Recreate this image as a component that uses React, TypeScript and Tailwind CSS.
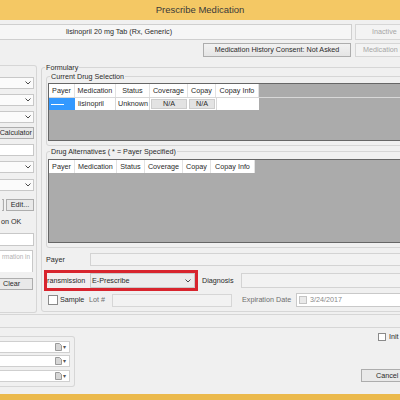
import React from "react";

type Col = { label: string; w: string };

const currentCols: Col[] = [
  { label: "Payer", w: "w-[26px]" },
  { label: "Medication", w: "w-[41px]" },
  { label: "Status", w: "w-[34px]" },
  { label: "Coverage", w: "w-[38px]" },
  { label: "Copay", w: "w-[28px]" },
  { label: "Copay Info", w: "w-[43px]" },
];

const altCols: Col[] = [
  { label: "Payer", w: "w-[26px]" },
  { label: "Medication", w: "w-[42px]" },
  { label: "Status", w: "w-[28px]" },
  { label: "Coverage", w: "w-[38px]" },
  { label: "Copay", w: "w-[28px]" },
  { label: "Copay Info", w: "w-[44px]" },
];

const Chevron = () => (
  <svg width="6" height="4" viewBox="0 0 6 4" className="shrink-0">
    <path d="M0.5 0.5 L3 3 L5.5 0.5" fill="none" stroke="#4a4a4a" strokeWidth="1" />
  </svg>
);

const PageIcon = () => (
  <svg width="7" height="8" viewBox="0 0 7 8" className="shrink-0">
    <path d="M0.5 0.5 H4.5 L6.5 2.5 V7.5 H0.5 Z" fill="#d6d6d6" stroke="#9a9a9a" />
  </svg>
);

function LeftCombo({ mt }: { mt: string }) {
  return (
    <div className={`${mt} h-[12px] w-[34px] shrink-0 bg-[#fbfbfb] border-y border-r border-[#c8c8c8] flex items-center justify-end pr-[2px]`}>
      <Chevron />
    </div>
  );
}

function GridHeader({ cols }: { cols: Col[] }) {
  return (
    <div className="flex h-[13px]">
      {cols.map((c) => (
        <div
          key={c.label}
          className={`${c.w} shrink-0 bg-white border-r border-[#e2e2e2] flex items-center justify-center whitespace-nowrap`}
        >
          {c.label}
        </div>
      ))}
    </div>
  );
}

function GroupLabel({ children }: { children: React.ReactNode }) {
  return (
    <span className="absolute left-[3px] top-[-5px] bg-[#f0f0f0] px-px leading-[9px] whitespace-nowrap">
      {children}
    </span>
  );
}

export default function App() {
  return (
    <div className="w-[400px] h-[400px] overflow-hidden bg-[#f0f0f0] flex flex-col font-['Liberation_Sans',Arial,sans-serif] text-[7.2px] leading-none text-[#2a2a2a]">
      {/* title bar */}
      <div className="h-[20px] shrink-0 bg-[#f4c864] flex items-center justify-center text-[9.5px] text-[#3a3a3a]">
        Prescribe Medication
      </div>

      {/* drug name row */}
      <div className="mt-[4px] h-[16px] shrink-0 flex">
        <div className="ml-[-114px] w-[466px] shrink-0 h-full border border-[#cfcfcf] bg-[#f6f6f6] flex items-center justify-center">
          lisinopril 20 mg Tab (Rx, Generic)
        </div>
        <div className="ml-[3px] w-[60px] shrink-0 h-full border border-[#d6d6d6] bg-[#f3f3f3] flex items-center pl-[16px] text-[#a6a6a6]">
          Inactive
        </div>
      </div>

      {/* consent row */}
      <div className="mt-[3px] h-[14px] shrink-0 flex">
        <div className="ml-[203px] w-[148px] shrink-0 h-full border border-[#adadad] bg-gradient-to-b from-[#f2f2f2] to-[#e5e5e5] flex items-center justify-center">
          Medication History Consent: Not Asked
        </div>
        <div className="ml-[4px] w-[80px] shrink-0 h-full border border-[#d6d6d6] bg-[#f3f3f3] flex items-center pl-[7px] text-[#a6a6a6] whitespace-nowrap">
          Medication History
        </div>
      </div>

      {/* main area */}
      <div className="h-[258px] shrink-0 flex items-start border-b border-[#d6d6d6]">
        {/* left panel, cut off by the window edge */}
        <div className="mt-[8px] w-[37px] h-[248px] shrink-0 border-t border-r border-b border-[#d6d6d6] rounded-r-[3px] flex flex-col">
          <LeftCombo mt="mt-[11px]" />
          <LeftCombo mt="mt-[5px]" />
          <LeftCombo mt="mt-[5px]" />
          <div className="mt-[4px] h-[12px] w-[34px] shrink-0 border-y border-r border-[#adadad] bg-[#e9e9e9] flex items-center justify-end pr-px whitespace-nowrap">
            Calculator
          </div>
          <div className="mt-[5px] h-[12px] w-[34px] shrink-0 bg-white border-y border-r border-[#c8c8c8]" />
          <LeftCombo mt="mt-[5px]" />
          <LeftCombo mt="mt-[6px]" />
          <div className="mt-[8px] h-[12px] w-[34px] shrink-0 flex justify-end gap-[2px]">
            <div className="w-[2px] border-y border-r border-[#adadad] bg-[#e9e9e9]" />
            <div className="w-[28px] border border-[#adadad] bg-[#e9e9e9] flex items-center justify-center">
              Edit...
            </div>
          </div>
          <div className="mt-[7px] h-[8px] pl-px flex items-center whitespace-nowrap">on OK</div>
          <div className="mt-[7px] h-[13px] w-[34px] shrink-0 bg-white border-y border-r border-[#c8c8c8]" />
          <div className="mt-[4px] h-[22px] w-[33px] shrink-0 bg-white border-t border-r border-[#c8c8c8] flex justify-end pr-[2px] pt-[3px] text-[6.4px] text-[#b2b2b2] whitespace-nowrap">
            rmation in
          </div>
          <div className="mt-[6px] h-[12px] w-[33px] shrink-0 border-y border-r border-[#adadad] bg-[#e9e9e9] flex items-center pl-[3px]">
            Clear
          </div>
        </div>

        {/* formulary group */}
        <div className="relative mt-[10px] ml-[4px] w-[420px] h-[245px] shrink-0 border border-[#d6d6d6] rounded-[3px] flex flex-col">
          <GroupLabel>Formulary</GroupLabel>

          {/* current drug selection */}
          <div className="relative mt-[8px] ml-[4px] h-[70px] shrink-0 border border-[#d6d6d6] rounded-[3px]">
            <GroupLabel>Current Drug Selection</GroupLabel>
            <div className="mt-[6px] ml-px h-[58px] w-[400px] border border-[#666666] bg-[#ababab]">
              <GridHeader cols={currentCols} />
              <div className="flex h-[13px] border-t border-[#d8d8d8]">
                <div className="w-[26px] shrink-0 bg-[#3399ff] flex items-center pl-[2px]">
                  <div className="h-px w-[13px] bg-white" />
                </div>
                <div className="w-[41px] shrink-0 bg-white border-r border-[#d8d8d8] flex items-center pl-[3px]">
                  lisinopril
                </div>
                <div className="w-[34px] shrink-0 bg-white border-r border-[#d8d8d8] flex items-center pl-[2px]">
                  Unknown
                </div>
                <div className="w-[38px] shrink-0 bg-white p-px">
                  <div className="h-full bg-[#e3e3e3] border border-[#cdcdcd] flex items-center justify-center">N/A</div>
                </div>
                <div className="w-[28px] shrink-0 bg-white p-px">
                  <div className="h-full bg-[#e3e3e3] border border-[#cdcdcd] flex items-center justify-center">N/A</div>
                </div>
                <div className="w-[43px] shrink-0 bg-white border-l border-[#d8d8d8]" />
              </div>
            </div>
          </div>

          {/* drug alternatives */}
          <div className="relative mt-[5px] ml-[4px] h-[97px] shrink-0 border border-[#d6d6d6] rounded-[3px]">
            <GroupLabel>Drug Alternatives ( * = Payer Specified)</GroupLabel>
            <div className="mt-[7px] ml-px h-[84px] w-[400px] border border-[#666666] bg-[#ababab]">
              <GridHeader cols={altCols} />
            </div>
          </div>

          {/* payer */}
          <div className="mt-[5px] ml-[4px] h-[13px] shrink-0 flex items-center">
            <span className="w-[44px] shrink-0">Payer</span>
            <div className="h-full flex-1 border border-[#d3d3d3] bg-[#f2f2f2]" />
          </div>

          {/* transmission + diagnosis */}
          <div className="mt-[4px] ml-[2px] h-[21px] shrink-0 flex items-center">
            <div className="w-[154px] h-full shrink-0 border-[3px] border-[#d8242d] flex items-center overflow-hidden">
              <span className="w-[43px] shrink-0 h-full bg-[#f3eeee] flex items-center">ransmission</span>
              <div className="h-full flex-1 border border-[#c9c9c9] bg-[#ececec] flex items-center justify-between pl-px pr-[3px]">
                <span>E-Prescribe</span>
                <Chevron />
              </div>
            </div>
            <span className="ml-[4px] w-[39px] shrink-0">Diagnosis</span>
            <div className="h-[15px] flex-1 border border-[#d3d3d3] bg-[#f2f2f2]" />
          </div>

          {/* sample row */}
          <div className="mt-[2px] ml-[6px] h-[14px] shrink-0 flex items-center">
            <div className="w-[10px] h-[10px] shrink-0 border border-[#8a8a8a] bg-white" />
            <span className="ml-[2px] w-[29px] shrink-0">Sample</span>
            <span className="w-[23px] shrink-0 text-[#6e6e6e]">Lot #</span>
            <div className="w-[120px] h-[13px] shrink-0 border border-[#d6d6d6] bg-[#f2f2f2]" />
            <span className="ml-[10px] w-[54px] shrink-0 text-[#6e6e6e] whitespace-nowrap">Expiration Date</span>
            <div className="h-[14px] w-[120px] shrink-0 border border-[#c9c9c9] bg-white flex items-center pl-[2px]">
              <div className="w-[8px] h-[8px] shrink-0 border border-[#c4c4c4] bg-[#e9e9e9]" />
              <span className="ml-[3px] text-[#8a8a8a]">3/24/2017</span>
              <svg width="7" height="7" viewBox="0 0 7 7" className="ml-[64px] shrink-0">
                <rect x="0.5" y="0.5" width="6" height="6" rx="1" fill="#e4e4e4" stroke="#c2c2c2" />
              </svg>
            </div>
          </div>
        </div>
      </div>

      {/* separator */}
      <div className="h-[13px] shrink-0 border-b border-[#d6d6d6]" />

      {/* bottom section */}
      <div className="h-[66px] shrink-0 flex items-start">
        <div className="mt-[8px] w-[75px] h-[51px] shrink-0 border-t border-r border-b border-[#d6d6d6] rounded-r-[3px] flex flex-col pt-[4px]">
          {["mt-0", "mt-[2px]", "mt-[3px]"].map((m) => (
            <div
              key={m}
              className={`${m} h-[12px] w-[70px] shrink-0 bg-white border-y border-r border-[#cfcfcf] flex items-center justify-end gap-px pr-[3px]`}
            >
              <PageIcon />
              <span className="text-[6px] text-[#555]">▾</span>
            </div>
          ))}
        </div>
        <div className="ml-auto w-[39px] shrink-0 flex flex-col">
          <div className="mt-[5px] pl-[17px] h-[8px] flex items-center whitespace-nowrap">
            <div className="w-[8px] h-[8px] shrink-0 border border-[#8a8a8a] bg-white" />
            <span className="ml-[3px]">Init</span>
          </div>
          <div className="mt-[28px] h-[13px] w-[39px] shrink-0 border-y border-l border-[#adadad] bg-[#e9e9e9] flex items-center pl-[14px]">
            Cancel
          </div>
        </div>
      </div>

      {/* bottom frame */}
      <div className="h-[6px] shrink-0 bg-[#ebb94c]" />
    </div>
  );
}
